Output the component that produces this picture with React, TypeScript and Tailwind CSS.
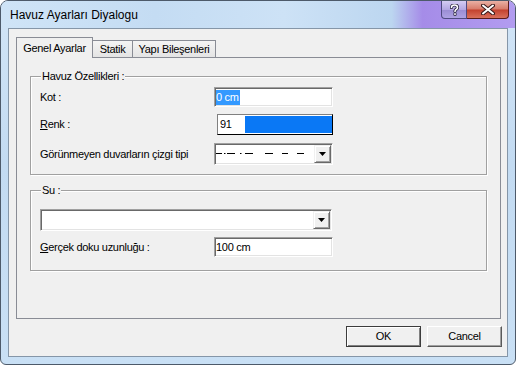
import React from "react";

function Sunken({ className, children }: { className: string; children?: React.ReactNode }) {
  return (
    <div
      className={`flex items-center border border-t-[#a0a0a0] border-l-[#a0a0a0] border-r-white border-b-white bg-white shadow-[inset_1px_1px_0_#696969,inset_-1px_-1px_0_#e3e3e3] ${className}`}
    >
      {children}
    </div>
  );
}

function DropButton() {
  return (
    <div className="mr-[1px] ml-auto flex h-[18px] w-[17px] items-center justify-center border border-t-[#f0f0f0] border-l-[#f0f0f0] border-r-[#696969] border-b-[#696969] bg-[#f0f0f0] shadow-[inset_1px_1px_0_#fff,inset_-1px_-1px_0_#a0a0a0]">
      <svg width="7" height="4" viewBox="0 0 7 4">
        <path d="M0 0h7L3.5 4z" fill="#000" />
      </svg>
    </div>
  );
}

function Button({ label, primary }: { label: string; primary?: boolean }) {
  return (
    <button
      type="button"
      className={
        primary
          ? "h-[21px] w-[75px] border border-[#3c3c3c] bg-[#f0f0f0] shadow-[inset_1px_1px_0_#fff,inset_-1px_-1px_0_#808080]"
          : "h-[21px] w-[75px] border border-t-white border-l-white border-r-[#5a5a5a] border-b-[#5a5a5a] bg-[#f0f0f0] shadow-[inset_-1px_-1px_0_#a0a0a0]"
      }
    >
      {label}
    </button>
  );
}

export default function App() {
  return (
    <div className="h-[365px] w-[516px] bg-white">
      <div className="flex h-[365px] w-[516px] flex-col overflow-hidden rounded-t-[8px] rounded-b-[6px] border border-[#4d5a6a] bg-[linear-gradient(180deg,#d2e5f7,#c3dbf2_45%,#c9e0f5)] font-['Liberation_Sans',Arial,sans-serif] text-[11px] tracking-[-0.3px] text-black">
        {/* title bar */}
        <div className="flex h-[27px] shrink-0 items-start bg-[linear-gradient(90deg,#cfe4f7,#c4dcf3_30%,#cde2f6_55%,#bcd6f0_76%,#a58ce8_82%,#b29cf0)]">
          <span className="mt-[7px] ml-[9px] text-[12px] leading-[14px] tracking-normal">
            Havuz Ayarları Diyalogu
          </span>
          <div className="mr-[6px] ml-auto flex">
            <div className="flex h-[18px] w-[26px] items-center justify-center rounded-bl-[4px] border border-t-0 border-[#4f4a80] bg-[linear-gradient(180deg,#d4ccf3,#b3a7e2_50%,#9a8cd3_52%,#aea2e4)]">
              <svg width="9" height="12" viewBox="0 0 9 12">
                <path
                  d="M1.5 3.5C1.5 1.8 2.8 1 4.5 1S7.5 2 7.5 3.4c0 1.5-1.4 2-2 2.6-.4.4-.5.8-.5 1.5M5 9.8v.8"
                  stroke="#2a2540"
                  strokeWidth="3.2"
                  fill="none"
                  strokeLinecap="round"
                />
                <path
                  d="M1.5 3.5C1.5 1.8 2.8 1 4.5 1S7.5 2 7.5 3.4c0 1.5-1.4 2-2 2.6-.4.4-.5.8-.5 1.5M5 9.8v.8"
                  stroke="#fff"
                  strokeWidth="1.6"
                  fill="none"
                  strokeLinecap="round"
                />
              </svg>
            </div>
            <div className="flex h-[18px] w-[42px] items-center justify-center rounded-br-[4px] border border-t-0 border-l-0 border-[#5a1c1c] bg-[linear-gradient(180deg,#eab0a4,#d77b6a_48%,#c3412e_52%,#d9705c)]">
              <svg width="14" height="11" viewBox="0 0 14 11">
                <path
                  d="M2 1.5l10 8M12 1.5l-10 8"
                  stroke="#3a1a1a"
                  strokeWidth="4"
                  strokeLinecap="round"
                />
                <path d="M2 1.5l10 8M12 1.5l-10 8" stroke="#fff" strokeWidth="2" strokeLinecap="round" />
              </svg>
            </div>
          </div>
        </div>

        {/* client */}
        <div className="flex flex-1 px-[7px] pb-[7px]">
          <div className="flex flex-1 flex-col border border-[#8596a8] bg-[#f0f0f0]">
            {/* tabs */}
            <div className="mt-[8px] mr-[6px] ml-[7px] flex h-[20px] items-end">
              <div className="relative z-10 -mb-px flex h-[21px] w-[77px] items-center justify-center border border-b-0 border-[#898c95] bg-[#f0f0f0]">
                Genel Ayarlar
              </div>
              <div className="-ml-px flex h-[17px] w-[41px] items-center justify-center border border-b-0 border-[#898c95] bg-[linear-gradient(180deg,#f4f4f4,#ececec_50%,#e4e4e4)]">
                Statik
              </div>
              <div className="-ml-px flex h-[17px] w-[84px] items-center justify-center border border-b-0 border-[#898c95] bg-[linear-gradient(180deg,#f4f4f4,#ececec_50%,#e4e4e4)]">
                Yapı Bileşenleri
              </div>
            </div>

            {/* panel */}
            <div className="mr-[6px] ml-[7px] h-[262px] border border-[#898c95] bg-[#f0f0f0] px-[13px] pt-[12px]">
              <fieldset className="border border-[#a0a0a0] px-[9px] pb-[9px] shadow-[inset_1px_1px_0_#fff,1px_1px_0_#fff]">
                <legend className="ml-[1px] bg-[#f0f0f0] px-[1px] leading-[13px]">Havuz Özellikleri :</legend>
                <div className="mt-[4px] grid grid-cols-[174px_119px] items-center">
                  <span>Kot :</span>
                  <Sunken className="h-[20px] w-[119px]">
                    <span className="ml-[1px] bg-[#3399ff] pr-[1px] leading-[15px] text-white">0 cm</span>
                  </Sunken>
                </div>
                <div className="mt-[7px] grid grid-cols-[174px_119px] items-center">
                  <span>
                    <span className="underline">R</span>enk :
                  </span>
                  <div className="ml-[3px] flex h-[21px] w-[116px] border border-t-[#808080] border-l-[#808080] border-r-black border-b-black bg-white p-[1px] pr-0">
                    <span className="flex w-[26px] items-center pl-[1px]">91</span>
                    <span className="flex-1 bg-[#0a78f5]" />
                  </div>
                </div>
                <div className="mt-[8px] grid grid-cols-[174px_119px] items-center">
                  <span>Görünmeyen duvarların çizgi tipi</span>
                  <Sunken className="h-[22px] w-[119px]">
                    <svg width="90" height="20" viewBox="0 0 90 20" className="shrink-0">
                      <g fill="#000">
                        <rect x="1" y="9" width="6" height="1" />
                        <rect x="9" y="9" width="1.5" height="1" />
                        <rect x="12" y="9" width="8" height="1" />
                        <rect x="25" y="9" width="1.5" height="1" />
                        <rect x="30" y="9" width="8" height="1" />
                        <rect x="50" y="9" width="8" height="1" />
                        <rect x="67" y="9" width="6" height="1" />
                        <rect x="82" y="9" width="7" height="1" />
                      </g>
                    </svg>
                    <DropButton />
                  </Sunken>
                </div>
              </fieldset>

              <fieldset className="mt-[9px] border border-[#a0a0a0] px-[9px] pb-[13px] shadow-[inset_1px_1px_0_#fff,1px_1px_0_#fff]">
                <legend className="ml-[1px] bg-[#f0f0f0] px-[1px] leading-[13px]">Su :</legend>
                <Sunken className="mt-[12px] h-[22px] w-[292px]">
                  <DropButton />
                </Sunken>
                <div className="mt-[6px] grid grid-cols-[174px_119px] items-center">
                  <span>
                    <span className="underline">G</span>erçek doku uzunluğu :
                  </span>
                  <Sunken className="h-[20px] w-[119px]">
                    <span className="ml-[1px]">100 cm</span>
                  </Sunken>
                </div>
              </fieldset>
            </div>

            {/* buttons */}
            <div className="mt-[7px] mr-[5px] flex justify-end gap-[6px]">
              <Button label="OK" primary />
              <Button label="Cancel" />
            </div>
          </div>
        </div>
      </div>
    </div>
  );
}
